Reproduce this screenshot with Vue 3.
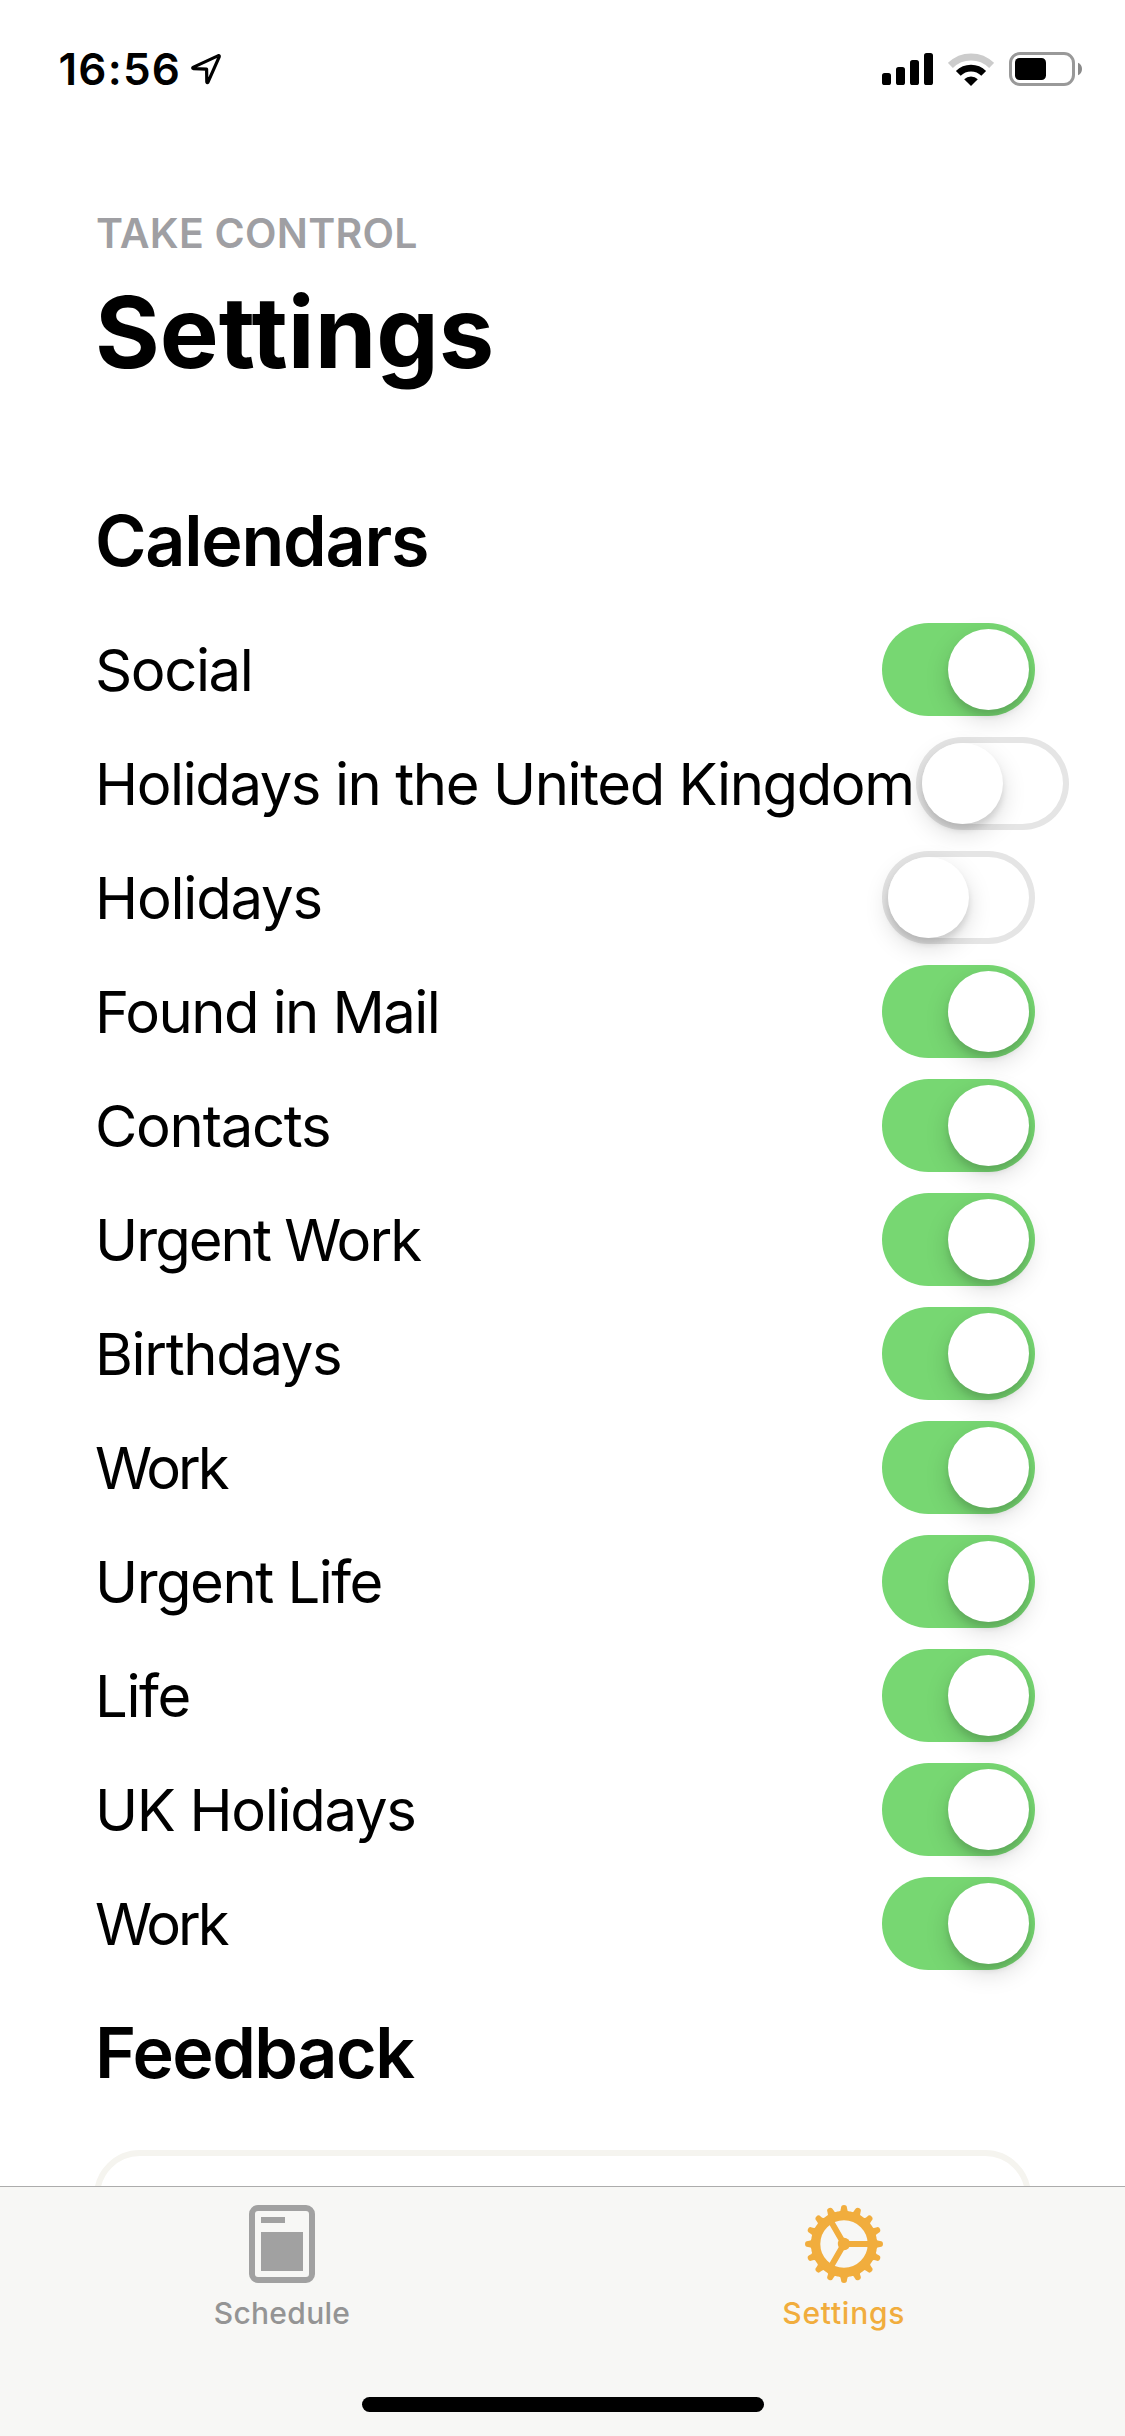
<script setup>
const calendars = [
  { name: 'Social', on: true, tracking: -1.4 },
  { name: 'Holidays in the United Kingdom', on: false, tracking: -1.42 },
  { name: 'Holidays', on: false, tracking: -1.2 },
  { name: 'Found in Mail', on: true, tracking: -1.58 },
  { name: 'Contacts', on: true, tracking: -1.26 },
  { name: 'Urgent Work', on: true, tracking: -1.95 },
  { name: 'Birthdays', on: true, tracking: -1.35 },
  { name: 'Work', on: true, tracking: -3 },
  { name: 'Urgent Life', on: true, tracking: -1.5 },
  { name: 'Life', on: true, tracking: -1.4 },
  { name: 'UK Holidays', on: true, tracking: -1.3 },
  { name: 'Work', on: true, tracking: -3 },
]
const teeth = Array.from({ length: 16 }, (_, i) => i * 22.5)
</script>

<template>
  <div class="screen">
    <header class="status">
      <div class="clock">
        <span class="time">16:56</span>
        <svg class="location" width="32" height="32" viewBox="0 0 32 32">
          <path d="M3 14.4 L28.4 2.6 Q29.6 2.4 29.2 3.8 L18 29.2 Q17.2 30.2 16.8 29 L16.6 16.2 L3.4 15.6 Q2.2 15.2 3 14.4Z" fill="none" stroke="#000" stroke-width="3.2" stroke-linejoin="round" />
        </svg>
      </div>
      <div class="indicators">
        <svg width="51" height="32" viewBox="0 0 51 32">
          <rect x="0" y="20" width="9" height="12" rx="2.6" />
          <rect x="14" y="14" width="9" height="18" rx="2.6" />
          <rect x="28" y="7" width="9" height="25" rx="2.6" />
          <rect x="42" y="0" width="9" height="32" rx="2.6" />
        </svg>
        <svg class="wifi" width="46" height="33" viewBox="0 0 46 33" fill="none">
          <path d="M2.4 12.4 A29.2 29.2 0 0 1 43.6 12.4" stroke="#ccc" stroke-width="7" />
          <path d="M10.3 20.3 A18 18 0 0 1 35.7 20.3" stroke="#000" stroke-width="6.8" />
          <path d="M16.2 26.2 A9.6 9.6 0 0 1 29.8 26.2 L23 33Z" fill="#000" />
        </svg>
        <svg class="battery" width="74" height="34" viewBox="0 0 74 34">
          <rect x="1.5" y="1.5" width="63" height="31" rx="9.5" fill="none" stroke="#999" stroke-width="3" />
          <rect x="6" y="6" width="31" height="22" rx="4.5" />
          <path d="M69 10.8 Q73 12.6 73 17 T69 23.2Z" fill="#8a8a8a" />
        </svg>
      </div>
    </header>

    <main class="content">
      <p class="eyebrow">TAKE CONTROL</p>
      <h1>Settings</h1>

      <h2 class="calendars-title">Calendars</h2>
      <ul class="calendars">
        <li v-for="(cal, i) in calendars" :key="i" class="row">
          <span class="name" :style="{ letterSpacing: cal.tracking + 'px' }">{{ cal.name }}</span>
          <span class="toggle" :class="{ on: cal.on }"><span class="knob"></span></span>
        </li>
      </ul>

      <h2 class="feedback-title">Feedback</h2>
      <div class="card"></div>
    </main>

    <nav class="tabs">
      <a class="tab schedule">
        <svg width="78" height="78" viewBox="0 0 78 78">
          <rect x="9" y="3" width="60" height="72" rx="6" fill="none" stroke="currentColor" stroke-width="6" />
          <rect x="18" y="12" width="24" height="6" fill="currentColor" />
          <rect x="18" y="27" width="42" height="39" fill="currentColor" />
        </svg>
        <span class="label">Schedule</span>
      </a>
      <a class="tab active">
        <svg width="78" height="78" viewBox="-39 -39 78 78" stroke="currentColor" fill="none">
          <circle r="28.4" stroke-width="9.4" />
          <g v-for="a in teeth" :key="a" :transform="`rotate(${a})`">
            <path d="M32 -5.2 Q33 -3 36 -3 A3 3 0 0 1 36 3 Q33 3 32 5.2Z" fill="currentColor" stroke="none" />
          </g>
          <path d="M0 0H26M0 0L-13 -22.5M0 0L-13 22.5" stroke-width="6" />
          <circle r="6.2" fill="currentColor" stroke="none" />
        </svg>
        <span class="label">Settings</span>
      </a>
      <div class="home"></div>
    </nav>
  </div>
</template>

<style>
body {
  margin: 0;
  background: #fff;
}
</style>

<style scoped>
.screen {
  width: 1125px;
  height: 2436px;
  display: flex;
  flex-direction: column;
  overflow: hidden;
  background: #fff;
  color: #000;
  font-family: Inter, "Liberation Sans", sans-serif;
}
h1, h2, p, ul {
  margin: 0;
  padding: 0;
}
svg {
  display: block;
  flex: none;
}
.status {
  height: 138px;
  flex: none;
  box-sizing: border-box;
  padding: 0 42px 0 58.5px;
  display: flex;
  align-items: center;
  justify-content: space-between;
}
.clock, .indicators {
  display: flex;
  align-items: center;
}
.time {
  font-size: 44px;
  font-weight: 600;
  line-height: 54px;
  letter-spacing: 1.2px;
}
.location {
  margin-left: 9px;
}
.wifi {
  margin-left: 15px;
}
.battery {
  margin-left: 15px;
}
.content {
  flex: 1;
  min-height: 0;
  overflow: hidden;
  box-sizing: border-box;
  padding: 70px 90px 0 95px;
}
.eyebrow {
  padding-left: 1px;
  font-size: 41px;
  font-weight: 600;
  line-height: 50px;
  letter-spacing: 0.25px;
  color: #9f9fa3;
}
h1 {
  margin-top: 14px;
  font-size: 99px;
  font-weight: 700;
  line-height: 120px;
}
h2 {
  font-size: 70px;
  font-weight: 600;
  line-height: 84px;
}
.calendars-title {
  margin-top: 107px;
  letter-spacing: -1.25px;
}
.calendars {
  margin-top: 29px;
  list-style: none;
}
.row {
  height: 114px;
  display: flex;
  align-items: center;
  justify-content: space-between;
  gap: 2.5px;
}
.name {
  flex: none;
  padding-top: 2px;
  font-size: 58px;
  line-height: 70px;
  white-space: nowrap;
}
.toggle {
  flex: none;
  width: 153px;
  height: 93px;
  box-sizing: border-box;
  padding: 6px;
  display: flex;
  border-radius: 47px;
  box-shadow: inset 0 0 0 6px #e5e5e5;
}
.toggle.on {
  justify-content: flex-end;
  background: #77d772;
  box-shadow: none;
}
.knob {
  width: 81px;
  height: 81px;
  border-radius: 50%;
  background: #fff;
  box-shadow: 0 9px 24px rgba(0, 0, 0, 0.15), 0 6px 6px rgba(0, 0, 0, 0.1);
}
.feedback-title {
  margin-top: 31px;
  letter-spacing: -1.5px;
}
.card {
  width: 937px;
  height: 180px;
  margin: 55px 0 0 -1px;
  box-sizing: border-box;
  border: 6px solid #f5f4ef;
  border-radius: 46px;
}
.tabs {
  height: 250px;
  flex: none;
  box-sizing: border-box;
  border-top: 1px solid #acacac;
  background: #f7f7f5;
  display: grid;
  grid-template-columns: 1fr 1fr;
  grid-template-rows: 210px 15px;
}
.tab {
  padding-top: 18px;
  display: flex;
  flex-direction: column;
  align-items: center;
  gap: 12px;
  color: #a1a1a1;
}
.tab.schedule {
  padding-left: 1.5px;
}
.tab .label {
  font-size: 30px;
  font-weight: 500;
  line-height: 36px;
  letter-spacing: 0.3px;
  color: #949494;
}
.tab.active {
  color: #f1ad3d;
}
.tab.active .label {
  letter-spacing: 0.75px;
  color: #f1ad3d;
}
.home {
  grid-column: 1 / -1;
  justify-self: center;
  width: 402px;
  height: 15px;
  border-radius: 8px;
  background: #000;
}
</style>
